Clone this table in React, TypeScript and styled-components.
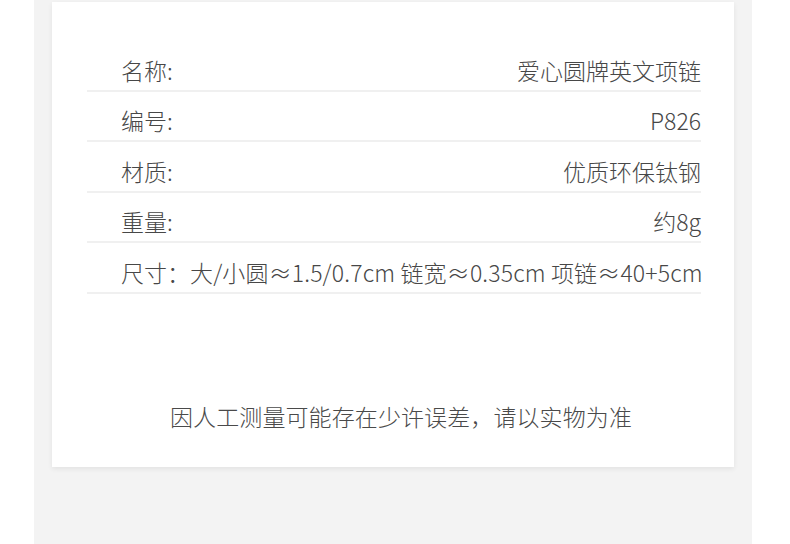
import React from "react";
import styled, { createGlobalStyle } from "styled-components";

const GlobalStyle = createGlobalStyle`
  html, body {
    margin: 0;
    padding: 0;
    background: #ffffff;
  }
  body {
    font-family: "Noto Sans CJK SC", "Noto Sans", sans-serif;
  }
`;

const Page = styled.div`
  width: 790px;
  height: 544px;
  overflow: hidden;
  background: #ffffff;
`;

const Column = styled.div`
  margin-left: 34px;
  width: 718px;
  height: 544px;
  box-sizing: border-box;
  padding: 2px 18px 0;
  background: #f3f3f3;
`;

const Card = styled.div`
  width: 682px;
  box-sizing: border-box;
  padding: 39px 33px 37px 35px;
  background: #ffffff;
  box-shadow: 0 2px 5px rgba(0, 0, 0, 0.07);
`;

const Table = styled.div`
  display: flex;
  flex-direction: column;
`;

const Row = styled.div`
  display: flex;
  align-items: flex-end;
  justify-content: space-between;
  height: 50.5px;
  box-sizing: border-box;
  padding: 0 0 6px 34px;
  border-bottom: 2px solid #f0f0f0;
  font-size: 23px;
  line-height: 28px;
  font-weight: 300;
  color: #474747;
`;

const Label = styled.span`
  white-space: nowrap;
`;

const Value = styled.span<{ $wide?: boolean }>`
  white-space: nowrap;
  text-align: right;
  letter-spacing: ${({ $wide }) => ($wide ? "0.15px" : "0")};
`;

const Note = styled.p`
  margin: 108px 0 0;
  padding-left: 14px;
  text-align: center;
  font-size: 23px;
  line-height: 28px;
  font-weight: 300;
  letter-spacing: 0.1px;
  color: #4a4a4a;
`;

const specs: { label: string; value: string }[] = [
  { label: "名称:", value: "爱心圆牌英文项链" },
  { label: "编号:", value: "P826" },
  { label: "材质:", value: "优质环保钛钢" },
  { label: "重量:", value: "约8g" },
];

export default function App() {
  return (
    <Page>
      <GlobalStyle />
      <Column>
        <Card>
          <Table>
            {specs.map((s) => (
              <Row key={s.label}>
                <Label>{s.label}</Label>
                <Value>{s.value}</Value>
              </Row>
            ))}
            <Row>
              <Label>尺寸：</Label>
              <Value $wide>大/小圆≈1.5/0.7cm 链宽≈0.35cm 项链≈40+5cm</Value>
            </Row>
          </Table>
          <Note>因人工测量可能存在少许误差，请以实物为准</Note>
        </Card>
      </Column>
    </Page>
  );
}
